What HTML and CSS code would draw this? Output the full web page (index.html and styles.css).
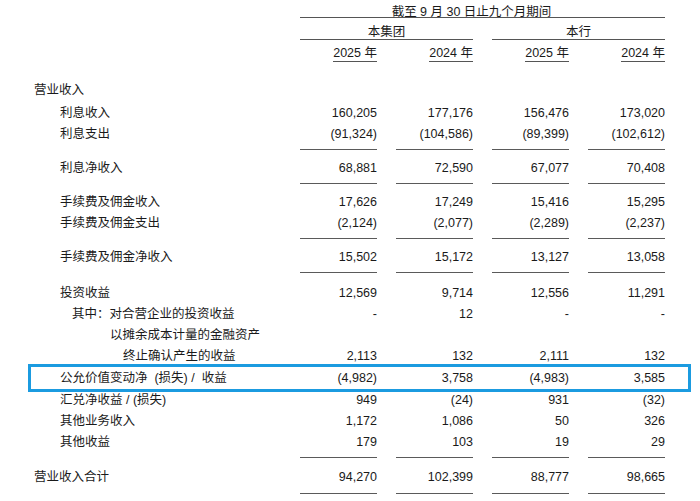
FILE: index.html
```html
<!DOCTYPE html>
<html lang="zh-CN">
<head>
<meta charset="utf-8">
<title>营业收入</title>
<link rel="stylesheet" href="styles.css">
</head>
<body>
<div class="sheet">
  <div class="hdr1"><span>截至 9 月 30 日止九个月期间</span></div>
  <div class="hdr2"><div class="grp">本集团</div><div class="grp">本行</div></div>
  <div class="row years">
    <div></div>
    <div class="yr"><span>2025 年</span></div>
    <div class="yr"><span>2024 年</span></div>
    <div class="yr"><span>2025 年</span></div>
    <div class="yr"><span>2024 年</span></div>
  </div>

  <div class="row top-gap first"><div class="lbl l0">营业收入</div></div>
  <div class="row"><div class="lbl l1">利息收入</div><div class="num">160,205</div><div class="num">177,176</div><div class="num">156,476</div><div class="num">173,020</div></div>
  <div class="row ruled"><div class="lbl l1">利息支出</div><div class="num">(91,324)</div><div class="num">(104,586)</div><div class="num">(89,399)</div><div class="num">(102,612)</div></div>
  <div class="row ruled"><div class="lbl l1">利息净收入</div><div class="num">68,881</div><div class="num">72,590</div><div class="num">67,077</div><div class="num">70,408</div></div>
  <div class="row"><div class="lbl l1">手续费及佣金收入</div><div class="num">17,626</div><div class="num">17,249</div><div class="num">15,416</div><div class="num">15,295</div></div>
  <div class="row ruled"><div class="lbl l1">手续费及佣金支出</div><div class="num">(2,124)</div><div class="num">(2,077)</div><div class="num">(2,289)</div><div class="num">(2,237)</div></div>
  <div class="row ruled gap-lg"><div class="lbl l1">手续费及佣金净收入</div><div class="num">15,502</div><div class="num">15,172</div><div class="num">13,127</div><div class="num">13,058</div></div>
  <div class="row"><div class="lbl l1">投资收益</div><div class="num">12,569</div><div class="num">9,714</div><div class="num">12,556</div><div class="num">11,291</div></div>
  <div class="row"><div class="lbl l2">其中：对合营企业的投资收益</div><div class="num">-</div><div class="num">12</div><div class="num">-</div><div class="num">-</div></div>
  <div class="row"><div class="lbl l3">以摊余成本计量的金融资产</div></div>
  <div class="row"><div class="lbl l4">终止确认产生的收益</div><div class="num">2,113</div><div class="num">132</div><div class="num">2,111</div><div class="num">132</div></div>
  <div class="row boxed"><div class="lbl l1">公允价值变动净&nbsp; (损失) /&nbsp; 收益</div><div class="num">(4,982)</div><div class="num">3,758</div><div class="num">(4,983)</div><div class="num">3,585</div></div>
  <div class="row"><div class="lbl l1">汇兑净收益 / (损失)</div><div class="num">949</div><div class="num">(24)</div><div class="num">931</div><div class="num">(32)</div></div>
  <div class="row"><div class="lbl l1">其他业务收入</div><div class="num">1,172</div><div class="num">1,086</div><div class="num">50</div><div class="num">326</div></div>
  <div class="row ruled gap-md"><div class="lbl l1">其他收益</div><div class="num">179</div><div class="num">103</div><div class="num">19</div><div class="num">29</div></div>
  <div class="row ruled total"><div class="lbl l0">营业收入合计</div><div class="num">94,270</div><div class="num">102,399</div><div class="num">88,777</div><div class="num">98,665</div></div>
</div>
</body>
</html>
```

FILE: styles.css
```css
html, body {
  margin: 0;
  padding: 0;
  background: #ffffff;
}

body {
  width: 700px;
  height: 501px;
  overflow: hidden;
  font-family: "Liberation Sans", "Noto Sans CJK SC", sans-serif;
  font-size: 12.5px;
  color: #1a1a1a;
}

.sheet {
  width: 700px;
}

.hdr1 {
  margin-left: 300px;
  width: 343px;
  padding-right: 22px;
  height: 17px;
  line-height: 24px;
  text-align: center;
  border-bottom: 1px solid #555;
  white-space: nowrap;
}

.hdr2 {
  display: grid;
  grid-template-columns: 281px 192px 192px;
  height: 22px;
}

.hdr2 .grp {
  margin-left: 19px;
  height: 21px;
  line-height: 29px;
  text-align: center;
  border-bottom: 1px solid #555;
}

.hdr2 .grp:first-child {
  grid-column: 2;
}

.row {
  display: grid;
  grid-template-columns: 281px repeat(4, 96px);
  line-height: 21px;
  position: relative;
}

.years {
  height: 22px;
}

.yr {
  display: flex;
  justify-content: flex-end;
  align-items: flex-end;
}

.yr span {
  display: inline-block;
  line-height: 15px;
  border-bottom: 1px solid #555;
  white-space: nowrap;
}

.top-gap {
  margin-top: 17.5px;
}

.first {
  margin-bottom: 2px;
}

.lbl {
  grid-column: 1;
  white-space: nowrap;
  height: 21px;
}

.l0 { padding-left: 34px; }
.l1 { padding-left: 60px; }
.l2 { padding-left: 72px; }
.l3 { padding-left: 110px; }
.l4 { padding-left: 123px; }

.num {
  margin-left: 19px;
  text-align: right;
  white-space: nowrap;
}

.ruled {
  margin-bottom: 8px;
}

.ruled .num {
  padding-bottom: 4px;
  border-bottom: 1px solid #5a5a5a;
}

.ruled.gap-lg {
  margin-bottom: 10px;
}

.ruled.gap-md {
  margin-bottom: 9px;
}

.ruled.total .num {
  padding-bottom: 5px;
}

.boxed {
  margin: 1px 0;
}

.boxed::after {
  content: "";
  position: absolute;
  left: 28px;
  top: -4px;
  width: 663px;
  height: 28px;
  box-sizing: border-box;
  border: 3px solid #1b9be0;
  pointer-events: none;
}
```
